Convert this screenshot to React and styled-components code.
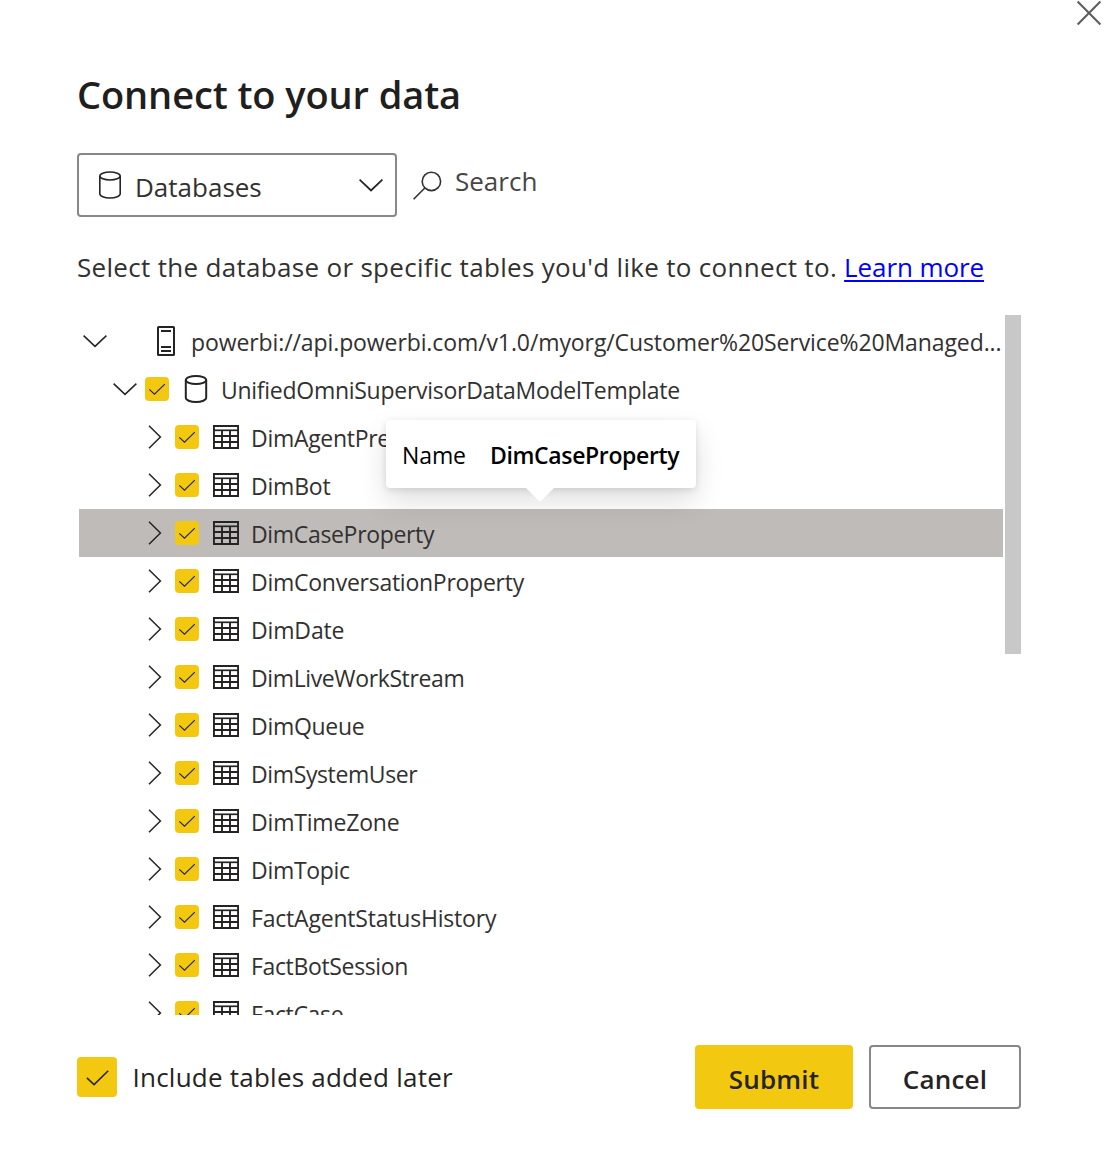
import React from 'react';
import styled, { createGlobalStyle } from 'styled-components';

const GlobalStyle = createGlobalStyle`
  *, *::before, *::after { box-sizing: border-box; }
  body {
    margin: 0;
    background: #fff;
    color: #252423;
    font-family: "Open Sans", "Noto Sans", sans-serif;
  }
`;

const Dialog = styled.main`
  position: relative;
  display: flex;
  flex-direction: column;
  width: 1107px;
  height: 1163px;
  padding: 70px 86px 0 77px;
  overflow: hidden;
`;

const CloseButton = styled.button`
  position: absolute;
  top: 0;
  right: 5px;
  display: flex;
  padding: 0;
  border: 0;
  background: none;
`;

const Title = styled.h1`
  margin: 0;
  font-size: 38px;
  font-weight: 600;
  line-height: 48px;
  letter-spacing: -0.1px;
  color: #201f1e;
`;

const Filters = styled.div`
  display: flex;
  align-items: flex-start;
  margin-top: 35px;
`;

const Select = styled.button`
  display: flex;
  align-items: center;
  width: 320px;
  height: 64px;
  padding: 0 12px 0 19px;
  border: 2px solid #8a8886;
  border-radius: 4px;
  background: #fff;
  color: #323130;
  font: 400 26px "Open Sans", "Noto Sans", sans-serif;
  letter-spacing: 0;
`;

const SelectLabel = styled.span`
  flex: 1;
  padding-top: 3px;
  margin-left: 13px;
  text-align: left;
`;

const SearchBox = styled.div`
  display: flex;
  align-items: center;
  height: 64px;
  margin-left: 16px;
  color: #484644;
  font-size: 26px;
  letter-spacing: 0;
`;

const SearchLabel = styled.span`
  margin-left: 13px;
  padding-bottom: 9px;
`;

const Hint = styled.p`
  margin: 32px 0 0;
  font-size: 26px;
  line-height: 36px;
  letter-spacing: 0.31px;
  white-space: nowrap;
  color: #323130;
`;

const HintLink = styled.a`
  color: #0000ff;
  letter-spacing: -0.1px;
  text-decoration: underline;
  text-decoration-thickness: 2px;
  text-underline-offset: 3px;
`;

const TreePane = styled.div`
  display: flex;
  justify-content: space-between;
  height: 700px;
  margin-top: 30px;
`;

const Tree = styled.div`
  position: relative;
  width: 926px;
  height: 700px;
  padding: 2px 0 0 2px;
  overflow: hidden;
`;

const ScrollThumb = styled.div`
  width: 16px;
  height: 339px;
  background: #c8c8c8;
`;

const Row = styled.div`
  display: flex;
  align-items: center;
  height: 48px;
  padding-left: ${(p) => 4 + p.$level * 30}px;
  background: ${(p) => (p.$active ? '#bebbb8' : 'transparent')};
`;

const Slot = styled.span`
  flex: none;
  display: flex;
  align-items: center;
  justify-content: center;
  width: ${(p) => p.$width}px;
  height: 30px;
  margin-right: ${(p) => p.$gap}px;
`;

const CheckSquare = styled.span`
  flex: none;
  display: flex;
  align-items: center;
  justify-content: center;
  width: ${(p) => p.$size}px;
  height: ${(p) => p.$size}px;
  border-radius: 4px;
  background: #f2c811;
`;

const RowLabel = styled.span`
  padding-top: 1px;
  font-size: 23px;
  line-height: 32px;
  letter-spacing: ${(p) => p.$tracking || 0}px;
  white-space: nowrap;
  color: #323130;
`;

const Callout = styled.div`
  position: absolute;
  top: 105px;
  left: 309px;
  display: flex;
  align-items: center;
  width: 310px;
  height: 68px;
  padding: 2px 0 0 16px;
  border-radius: 4px;
  background: #fff;
  box-shadow: 0 13px 29px rgba(0, 0, 0, 0.13), 0 2px 7px rgba(0, 0, 0, 0.11);
  color: #000;
  font-size: 23px;
  letter-spacing: -0.1px;
  white-space: nowrap;
`;

const CalloutValue = styled.strong`
  margin-left: 24px;
  font-weight: 600;
  letter-spacing: -0.35px;
`;

const CalloutBeak = styled.svg`
  position: absolute;
  top: 68px;
  left: 140px;
`;

const Footer = styled.footer`
  display: flex;
  align-items: center;
  height: 64px;
  margin-top: 30px;
`;

const IncludeLabel = styled.span`
  flex: 1;
  margin-left: 15.5px;
  font-size: 26px;
  letter-spacing: 0.23px;
`;

const ActionButton = styled.button`
  width: ${(p) => (p.$primary ? 158 : 152)}px;
  height: 64px;
  margin-left: ${(p) => (p.$primary ? 0 : 16)}px;
  padding: 3px 0 0;
  border: 2px solid ${(p) => (p.$primary ? '#f2c811' : '#8a8886')};
  border-radius: 4px;
  background: ${(p) => (p.$primary ? '#f2c811' : '#fff')};
  color: #252423;
  font: 600 26px "Open Sans", "Noto Sans", sans-serif;
  letter-spacing: 0.2px;
`;

const ChevronDown = ({ width = 1.5 }) => (
  <svg width="24" height="24" viewBox="0 0 24 24" fill="none" stroke="#252423" strokeWidth={width}>
    <path d="M.6 6.6 12 17.4 23.4 6.6" />
  </svg>
);

const ChevronRight = () => (
  <svg width="24" height="24" viewBox="0 0 24 24" fill="none" stroke="#252423" strokeWidth="1.5">
    <path d="M6 .8 17.4 12 6 23.2" />
  </svg>
);

const Check = ({ size }) => (
  <svg width={size} height={size} viewBox="0 0 24 24" fill="none" stroke="#252423" strokeWidth="1.1">
    <path d="M4.3 12.3 9.5 17.2 19.8 7.1" />
  </svg>
);

const DatabaseIcon = ({ stroke = 2 }) => (
  <svg width="24" height="28" viewBox="0 0 24 28" fill="none" stroke="#252423" strokeWidth={stroke}>
    <ellipse cx="12" cy="5" rx="10.2" ry="4" />
    <path d="M1.8 5v17.8C1.8 25 6.2 27 12 27s10.2-2 10.2-4.2V5" />
  </svg>
);

const ServerIcon = () => (
  <svg width="18" height="30" viewBox="0 0 18 30" fill="none" stroke="#252423" strokeWidth="2">
    <rect x="1" y="1" width="16" height="28" rx=".6" />
    <path d="M4 5h10M4 21h10M4 25h10" />
  </svg>
);

const TableIcon = () => (
  <svg width="26" height="24" viewBox="0 0 26 24" fill="none" stroke="#252423">
    <path strokeWidth="2" d="M0 1h26M0 11h26M0 17h26M0 23h26" />
    <path strokeWidth="1.7" d="M0 5.3h26" />
    <path strokeWidth="1.9" d="M.95 0v24M25.05 0v24M9 5v18M17 5v18" />
  </svg>
);

const SearchIcon = () => (
  <svg width="29" height="29" viewBox="0 0 29 29" fill="none" stroke="#323130" strokeWidth="1.6">
    <circle cx="18.4" cy="10.4" r="9.2" />
    <path d="M11.8 17 .6 28.2" />
  </svg>
);

const tables = [
  ['DimAgentPresence', -0.3],
  ['DimBot', -0.2],
  ['DimCaseProperty', -0.33],
  ['DimConversationProperty', -0.26],
  ['DimDate', -0.15],
  ['DimLiveWorkStream', -0.38],
  ['DimQueue', -0.3],
  ['DimSystemUser', -0.38],
  ['DimTimeZone', -0.18],
  ['DimTopic', -0.3],
  ['FactAgentStatusHistory', -0.2],
  ['FactBotSession', -0.35],
  ['FactCase', -0.35],
];

function TreeRow({ level, label, tracking, icon, open, checked, active }) {
  return (
    <Row $level={level} $active={active}>
      <Slot $width={24} $gap={8}>{open ? <ChevronDown /> : <ChevronRight />}</Slot>
      <Slot $width={24} $gap={12}>
        {checked && (
          <CheckSquare $size={24}>
            <Check size={24} />
          </CheckSquare>
        )}
      </Slot>
      <Slot $width={30} $gap={10}>{icon}</Slot>
      <RowLabel $tracking={tracking}>{label}</RowLabel>
    </Row>
  );
}

export default function App() {
  return (
    <>
      <GlobalStyle />
      <Dialog>
        <CloseButton aria-label="Close">
          <svg width="26" height="26" viewBox="0 0 26 26" stroke="#605e5c" strokeWidth="2.1">
            <path d="M1.6 1.6 24.4 24.4M24.4 1.6 1.6 24.4" />
          </svg>
        </CloseButton>
        <Title>Connect to your data</Title>
        <Filters>
          <Select>
            <DatabaseIcon stroke={1.6} />
            <SelectLabel>Databases</SelectLabel>
            <ChevronDown width={1.8} />
          </Select>
          <SearchBox>
            <SearchIcon />
            <SearchLabel>Search</SearchLabel>
          </SearchBox>
        </Filters>
        <Hint>
          Select the database or specific tables you'd like to connect to. <HintLink>Learn more</HintLink>
        </Hint>
        <TreePane>
          <Tree>
            <TreeRow
              level={0}
              open
              icon={<ServerIcon />}
              label="powerbi://api.powerbi.com/v1.0/myorg/Customer%20Service%20Managed..."
              tracking={-0.1}
            />
            <TreeRow
              level={1}
              open
              checked
              icon={<DatabaseIcon />}
              label="UnifiedOmniSupervisorDataModelTemplate"
              tracking={-0.275}
            />
            {tables.map(([name, tracking]) => (
              <TreeRow
                key={name}
                level={2}
                checked
                active={name === 'DimCaseProperty'}
                icon={<TableIcon />}
                label={name}
                tracking={tracking}
              />
            ))}
            <Callout>
              <span>Name</span>
              <CalloutValue>DimCaseProperty</CalloutValue>
              <CalloutBeak width="28" height="14" viewBox="0 0 28 14" fill="#fff">
                <path d="M0 0h28L15.5 12.4Q14 13.6 12.5 12.4Z" />
              </CalloutBeak>
            </Callout>
          </Tree>
          <ScrollThumb />
        </TreePane>
        <Footer>
          <CheckSquare $size={40}>
            <Check size={33} />
          </CheckSquare>
          <IncludeLabel>Include tables added later</IncludeLabel>
          <ActionButton $primary>Submit</ActionButton>
          <ActionButton>Cancel</ActionButton>
        </Footer>
      </Dialog>
    </>
  );
}
